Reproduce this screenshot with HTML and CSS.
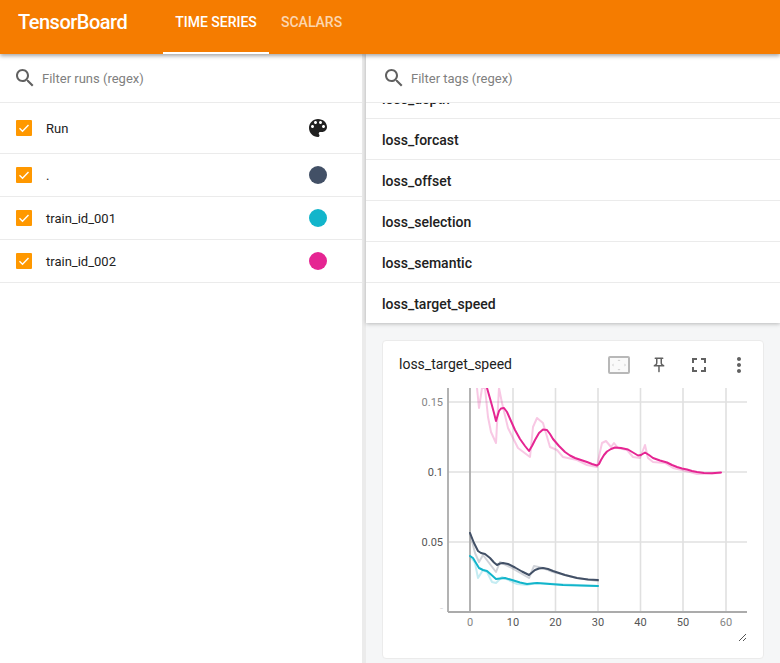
FILE: index.html
```html
<!DOCTYPE html>
<html lang="en">
<head>
    <meta charset="UTF-8">
    <meta name="viewport" content="width=device-width, initial-scale=1.0">
    <title>TensorBoard</title>
    <link rel="stylesheet" href="styles.css">
</head>
<body>
    <header class="toolbar">
        <div class="brand">TensorBoard</div>
        <nav class="tabs">
            <div class="tab active">TIME SERIES</div>
            <div class="tab">SCALARS</div>
        </nav>
    </header>

    <main class="layout">
        <aside class="sidebar">
            <div class="filter">
                <svg class="search-icon" viewBox="0 0 24 24"><path d="M15.5 14h-.79l-.28-.27C15.41 12.59 16 11.11 16 9.5 16 5.91 13.09 3 9.5 3S3 5.91 3 9.5 5.91 16 9.5 16c1.61 0 3.09-.59 4.23-1.57l.27.28v.79l5 4.99L20.49 19l-4.99-5zm-6 0C7.01 14 5 11.99 5 9.5S7.01 5 9.5 5 14 7.01 14 9.5 11.99 14 9.5 14z"/></svg>
                <span class="placeholder">Filter runs (regex)</span>
            </div>
            <div class="run run-head">
                <span class="checkbox"><svg viewBox="0 0 16 16"><path d="M3.5 8.3l3 3 6-6.3"/></svg></span>
                <span class="run-name">Run</span>
                <svg class="palette" viewBox="0 0 24 24"><path d="M12 3c-4.97 0-9 4.03-9 9s4.03 9 9 9c.83 0 1.5-.67 1.5-1.5 0-.39-.15-.74-.39-1.01-.23-.26-.38-.61-.38-.99 0-.83.67-1.5 1.5-1.5H16c2.76 0 5-2.24 5-5 0-4.42-4.03-8-9-8zm-5.5 9c-.83 0-1.5-.67-1.5-1.5S5.67 9 6.5 9 8 9.67 8 10.5 7.33 12 6.5 12zm3-4C8.67 8 8 7.33 8 6.5S8.67 5 9.5 5s1.5.67 1.5 1.5S10.33 8 9.5 8zm5 0c-.83 0-1.5-.67-1.5-1.5S13.67 5 14.5 5s1.5.67 1.5 1.5S15.33 8 14.5 8zm3 4c-.83 0-1.5-.67-1.5-1.5S16.67 9 17.5 9s1.5.67 1.5 1.5-.67 1.5-1.5 1.5z"/></svg>
            </div>
            <div class="run">
                <span class="checkbox"><svg viewBox="0 0 16 16"><path d="M3.5 8.3l3 3 6-6.3"/></svg></span>
                <span class="run-name">.</span>
                <span class="swatch slate"></span>
            </div>
            <div class="run">
                <span class="checkbox"><svg viewBox="0 0 16 16"><path d="M3.5 8.3l3 3 6-6.3"/></svg></span>
                <span class="run-name">train_id_001</span>
                <span class="swatch cyan"></span>
            </div>
            <div class="run">
                <span class="checkbox"><svg viewBox="0 0 16 16"><path d="M3.5 8.3l3 3 6-6.3"/></svg></span>
                <span class="run-name">train_id_002</span>
                <span class="swatch pink"></span>
            </div>
        </aside>

        <section class="content">
            <div class="tags-panel">
                <div class="filter">
                    <svg class="search-icon" viewBox="0 0 24 24"><path d="M15.5 14h-.79l-.28-.27C15.41 12.59 16 11.11 16 9.5 16 5.91 13.09 3 9.5 3S3 5.91 3 9.5 5.91 16 9.5 16c1.61 0 3.09-.59 4.23-1.57l.27.28v.79l5 4.99L20.49 19l-4.99-5zm-6 0C7.01 14 5 11.99 5 9.5S7.01 5 9.5 5 14 7.01 14 9.5 11.99 14 9.5 14z"/></svg>
                    <span class="placeholder">Filter tags (regex)</span>
                </div>
                <div class="tag-scroll">
                    <div class="tag">loss_depth</div>
                    <div class="tag">loss_forcast</div>
                    <div class="tag">loss_offset</div>
                    <div class="tag">loss_selection</div>
                    <div class="tag">loss_semantic</div>
                    <div class="tag">loss_target_speed</div>
                </div>
            </div>

            <div class="cards">
                <div class="card">
                    <div class="card-head">
                        <div class="card-title">loss_target_speed</div>
                        <div class="card-actions">
                            <span class="action">
                                <svg class="fit-icon" viewBox="0 0 22 18">
                                    <rect x="1" y="1" width="20" height="16" rx="1"/>
                                    <path d="M11 3.500l-1.500 1.500h3zM11 14.500l-1.500-1.500h3zM4 9l1.500-1.500v3zM18 9l-1.500-1.500v3z"/>
                                </svg>
                            </span>
                            <span class="action">
                                <svg class="pin-icon" viewBox="0 0 24 24"><path d="M14 4v5c0 1.120.370 2.160 1 3H9c.650-.860 1-1.900 1-3V4h4m3-2H7c-.550 0-1 .450-1 1s.450 1 1 1h1v5c0 1.660-1.340 3-3 3v2h5.970v7l1 1 1-1v-7H19v-2c-1.660 0-3-1.340-3-3V4h1c.550 0 1-.450 1-1s-.450-1-1-1z"/></svg>
                            </span>
                            <span class="action">
                                <svg class="action-icon" viewBox="0 0 24 24"><path d="M7 14H5v5h5v-2H7v-3zm-2-4h2V7h3V5H5v5zm12 7h-3v2h5v-5h-2v3zM14 5v2h3v3h2V5h-5z"/></svg>
                            </span>
                            <span class="action">
                                <svg class="action-icon" viewBox="0 0 24 24"><path d="M12 8c1.100 0 2-.9 2-2s-.9-2-2-2-2 .9-2 2 .9 2 2 2zm0 2c-1.100 0-2 .9-2 2s.9 2 2 2 2-.9 2-2-.9-2-2-2zm0 6c-1.100 0-2 .9-2 2s.9 2 2 2 2-.9 2-2-.9-2-2-2z"/></svg>
                            </span>
                        </div>
                    </div>

                    <!-- viewBox uses page coordinates so the numbers line up with the screenshot -->
                    <svg class="chart" viewBox="383 388 380 270">
                        <g class="grid">
                            <line x1="448" y1="402" x2="747" y2="402"/>
                            <line x1="448" y1="472" x2="747" y2="472"/>
                            <line x1="448" y1="542" x2="747" y2="542"/>
                            <line x1="513" y1="388" x2="513" y2="612"/>
                            <line x1="555.500" y1="388" x2="555.500" y2="612"/>
                            <line x1="598" y1="388" x2="598" y2="612"/>
                            <line x1="640.500" y1="388" x2="640.500" y2="612"/>
                            <line x1="683" y1="388" x2="683" y2="612"/>
                            <line x1="726" y1="388" x2="726" y2="612"/>
                        </g>
                        <g class="axis">
                            <line x1="470" y1="388" x2="470" y2="612"/>
                            <line x1="448" y1="388" x2="448" y2="612"/>
                            <line x1="448" y1="612" x2="747" y2="612"/>
                        </g>

                        <polyline class="raw pink-line" points="477,388 479,408 482,388 485,388 488,417 491,432 496,443 499,388 502,403 508,428 518,448 530,457 533,427 537,418 543,423 550,447 557,450 563,457 577,460 587,465 597,467 600,452 602,443 606,441 611,447 614,443 618,448 627,450 633,457 640,458 645,445 648,458 653,462 665,463 673,468 690,472 697,474 720,473"/>
                        <polyline class="raw slate-line" points="470,533 475,553 479,562 483,555 496,572 500,562 510,567 529,578 534,566 543,568 553,572 577,578 598,581"/>
                        <polyline class="raw cyan-line" points="470,556 475,563 478,578 483,570 487,572 492,582 496,583 502,577 517,584 527,585 535,583 598,586"/>

                        <polyline class="smooth pink-line" points="487,388 491,402 494,413 496,421 497.500,416 499,411 501,408.500 504,408 507,412 511,421 515,430 520,439 525,446 529,451 532,446 535,440 539,433 543,429.500 547,430 550,434 553,439 559,446 565,452 570,455.500 575,458 581,460 587,462 592,464 597,465.500 599,464 601,460 604,455 607,451.500 611,449 615,447.500 621,448 628,449.500 633,452.500 638,455.500 641,455 645,452.500 649,455 653,458 660,460.500 667,462.500 672,465 677,467 682,468.500 687,469.500 692,471 697,472 704,473 712,473.300 721,472.500"/>
                        <polyline class="smooth slate-line" points="470,533 474,543 478,551 481,553 485,554 490,558 494,562.500 497,565 500,563.500 503,563 508,564 515,567.500 522,571.500 529,575 532,572.500 535,570 539,568.500 543,568 548,569 553,571 565,575 577,578 588,579.500 598,580"/>
                        <polyline class="smooth cyan-line" points="470,556 473,558 476,563 479,568 483,570 487,571 491,574.500 496,579 500,578.500 505,578 512,580 520,582.500 527,584 537,583 550,584 563,585 580,585.500 598,586"/>

                        <text class="tick y-tick faint" x="443" y="406">0.15</text>
                        <text class="tick y-tick" x="443" y="476">0.1</text>
                        <text class="tick y-tick" x="443" y="546">0.05</text>
                        <text class="tick y-tick ghost" x="443" y="612">-</text>
                        <text class="tick x-tick faint" x="470" y="626">0</text>
                        <text class="tick x-tick" x="513" y="626">10</text>
                        <text class="tick x-tick" x="555.500" y="626">20</text>
                        <text class="tick x-tick" x="598" y="626">30</text>
                        <text class="tick x-tick" x="640.500" y="626">40</text>
                        <text class="tick x-tick" x="683" y="626">50</text>
                        <text class="tick x-tick faint" x="726" y="626">60</text>

                        <path class="grip" d="M739 641l7-7M743 641l3-3"/>
                    </svg>
                </div>
            </div>
        </section>
    </main>
</body>
</html>
```

FILE: styles.css
```css
* {
    box-sizing: border-box;
}

html, body {
    height: 100%;
}

body {
    margin: 0;
    overflow: hidden;
    display: flex;
    flex-direction: column;
    font-family: Roboto, "Liberation Sans", sans-serif;
    color: #212121;
    background: #fff;
}

/* top bar */
.toolbar {
    position: relative;
    z-index: 2;
    flex: none;
    height: 54px;
    display: flex;
    background: #f57c00;
    color: #fff;
    box-shadow: 0 2px 4px rgba(0, 0, 0, 0.35);
}

.brand {
    width: 163px;
    padding-left: 18px;
    font-size: 20px;
    font-weight: 500;
    letter-spacing: -0.5px;
    line-height: 45px;
}

.tabs {
    display: flex;
}

.tab {
    padding: 0 12px;
    font-size: 14px;
    font-weight: 500;
    line-height: 44px;
    color: rgba(255, 255, 255, 0.7);
}

.tab.active {
    width: 106px;
    padding: 0;
    text-align: center;
    color: #fff;
    border-bottom: 2px solid #fff;
}

.layout {
    flex: 1;
    min-height: 0;
    display: flex;
}

/* runs */
.sidebar {
    flex: none;
    width: 366px;
    border-right: 4px solid #ebebeb;
}

.filter {
    height: 49px;
    display: flex;
    align-items: center;
    gap: 5px;
    padding-left: 13px;
    background: #fff;
    border-bottom: 1px solid #ebebeb;
}

.search-icon {
    width: 24px;
    height: 24px;
    fill: #616161;
}

.placeholder {
    font-size: 13px;
    color: #808080;
}

.run {
    height: 43px;
    display: flex;
    align-items: center;
    padding: 0 35px 0 16px;
    font-size: 13px;
    border-bottom: 1px solid #ebebeb;
}

.run-head {
    height: 51px;
}

.checkbox {
    flex: none;
    width: 16px;
    height: 16px;
    margin-right: 14px;
    background: #ff9800;
    border-radius: 1px;
}

.checkbox svg {
    display: block;
    fill: none;
    stroke: #fff;
    stroke-width: 1.4;
}

.run-name {
    flex: 1;
}

.palette {
    width: 24px;
    height: 24px;
    margin-right: -3px;
    fill: #212121;
}

.swatch {
    width: 18px;
    height: 18px;
    border-radius: 50%;
}

.slate { background: #425066; }
.cyan { background: #12b5cb; }
.pink { background: #e52592; }

/* right side */
.content {
    flex: 1;
    min-width: 0;
    display: flex;
    flex-direction: column;
    background: #f5f6f7;
}

.tags-panel {
    flex: none;
    background: #fff;
    box-shadow: 0 1px 4px rgba(0, 0, 0, 0.25);
}

.content .filter {
    padding-left: 16px;
}

.tag-scroll {
    height: 220px;
    overflow: hidden;
    display: flex;
    flex-direction: column;
    justify-content: flex-end;
}

.tag {
    flex: none;
    height: 41px;
    padding-left: 16px;
    font-size: 14px;
    font-weight: 500;
    line-height: 42px;
    border-top: 1px solid #ebebeb;
}

.cards {
    padding: 17px 16px 0;
}

.card {
    height: 319px;
    background: #fff;
    border: 1px solid #ebebeb;
    border-radius: 4px;
}

.card-head {
    height: 47px;
    display: flex;
    align-items: center;
    justify-content: space-between;
    padding: 0 4px 0 16px;
}

.card-title {
    padding-bottom: 2px;
    font-size: 14px;
}

.card-actions {
    display: flex;
}

.action {
    width: 40px;
    height: 40px;
    display: flex;
    align-items: center;
    justify-content: center;
}

.action-icon {
    width: 24px;
    height: 24px;
    fill: #616161;
}

.pin-icon {
    width: 18px;
    height: 18px;
    fill: #616161;
}

.fit-icon {
    width: 22px;
    height: 18px;
}

.fit-icon rect {
    fill: #fafafa;
    stroke: #b8b8b8;
    stroke-width: 2;
}

.fit-icon path {
    fill: #d0d0d0;
}

/* chart */
.chart {
    display: block;
    width: 380px;
    height: 270px;
}

.grid line {
    stroke: #e0e0e0;
    stroke-width: 1.6;
}

.axis line {
    stroke: #ababab;
    stroke-width: 1.8;
}

polyline {
    fill: none;
    stroke-linejoin: round;
    stroke-linecap: round;
}

.raw {
    stroke-width: 2;
    opacity: 0.25;
}

.smooth {
    stroke-width: 2;
}

.pink-line { stroke: #e52592; }
.slate-line { stroke: #425066; }
.cyan-line { stroke: #12b5cb; }

.tick {
    font-size: 11px;
    fill: #555;
}

.y-tick {
    text-anchor: end;
}

.x-tick {
    text-anchor: middle;
}

.faint {
    fill: #858585;
}

.ghost {
    fill: #dcdcdc;
}

.grip {
    fill: none;
    stroke: #555;
    stroke-width: 1;
}
```
